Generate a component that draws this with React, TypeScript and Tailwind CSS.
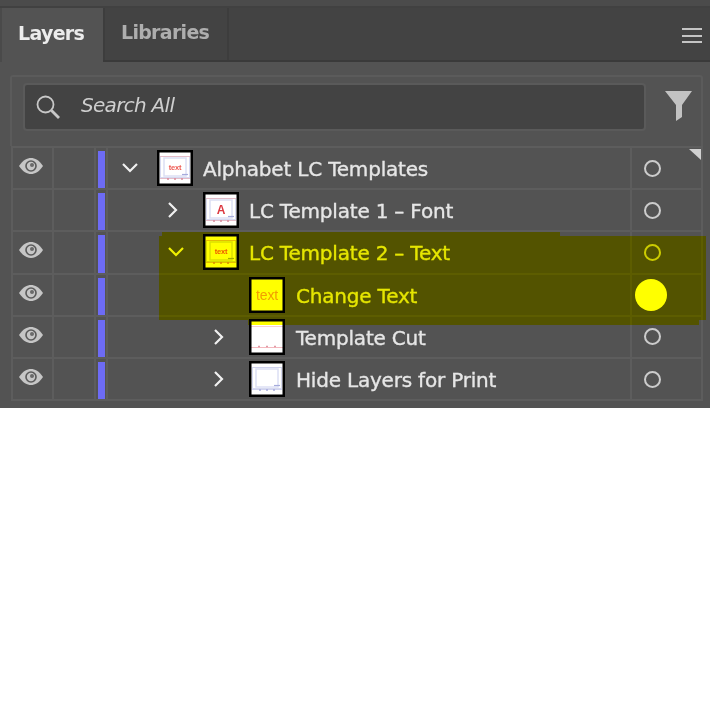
const font = { fontFamily: '"DejaVu Sans", "Noto Sans", sans-serif' };

function Eye() {
  return (
    <svg width="26" height="18" viewBox="0 0 26 18" aria-hidden="true">
      <path d="M1 9 C5 3 9 1 13 1 C17 1 21 3 25 9 C21 15 17 17 13 17 C9 17 5 15 1 9 Z" fill="#c6c6c6" />
      <circle cx="13" cy="9" r="5.8" fill="#5a5a5a" />
      <circle cx="13" cy="9" r="4.2" fill="#c6c6c6" />
      <circle cx="14" cy="8" r="2" fill="#6a6a6a" />
    </svg>
  );
}

function Chevron({ open }: { open: boolean }) {
  return (
    <svg width="16" height="18" viewBox="0 0 16 18" fill="none" stroke="#f0f0f0" strokeWidth="2.2" aria-hidden="true">
      {open ? <path d="M1 5 L8 12 L15 5" /> : <path d="M1 2 L8 9 L1 16" />}
    </svg>
  );
}

type Kind = 'root' | 'font' | 'text' | 'change' | 'cut' | 'hide';

function Thumb({ kind }: { kind: Kind }) {
  return (
    <svg width="36" height="36" viewBox="0 0 36 36" className="shrink-0" aria-hidden="true">
      <rect x="0" y="0" width="36" height="36" fill="#ffffff" />
      {kind === 'change' && (
        <text x="18" y="23" textAnchor="middle" fontSize="14" fill="#f2a0a0" fontFamily="Liberation Sans, sans-serif">text</text>
      )}
      {(kind === 'root' || kind === 'font' || kind === 'text' || kind === 'hide') && (
        <g fill="none">
          <rect x="3.5" y="6.5" width="29" height="21" stroke="#d6d9f0" strokeWidth="1" />
          <rect x="7" y="8" width="22" height="18" stroke="#dcdff4" strokeWidth="1.5" />
          <path d="M3 6.5 H33 M3 28.5 H33" stroke={kind === 'hide' ? '#d0d3ee' : '#e4bcc8'} strokeWidth="1" />
          <path d="M25 24.5 H31" stroke="#a6abdc" strokeWidth="1.2" />
          <path d="M10 29 h2 M17 29 h2 M24 29 h2" stroke={kind === 'hide' ? '#a6abdc' : '#d88a9c'} strokeWidth="1.5" />
        </g>
      )}
      {(kind === 'root' || kind === 'text') && (
        <text x="18" y="19.5" textAnchor="middle" fontSize="7.5" fill="#ee5a52" fontWeight="700" fontFamily="Liberation Sans, sans-serif">text</text>
      )}
      {kind === 'font' && (
        <text x="18" y="22" textAnchor="middle" fontSize="12" fill="#dc3a42" fontWeight="700" fontFamily="Liberation Sans, sans-serif">A</text>
      )}
      {kind === 'cut' && (
        <g fill="none">
          <path d="M0 7.5 H36" stroke="#f6d0d4" strokeWidth="1" />
          <path d="M0 28.5 H36" stroke="#f4b8be" strokeWidth="1" />
          <path d="M9 27.5 h2 M17 27.5 h2 M25 27.5 h2" stroke="#e09aa6" strokeWidth="1.5" />
        </g>
      )}
      <rect x="1.25" y="1.25" width="33.5" height="33.5" fill="none" stroke="#000000" strokeWidth="2.5" />
    </svg>
  );
}

type Row = { name: string; kind: Kind; eye: boolean; indent: string; gap: string; chevron: 'open' | 'closed' | null };

const rows: Row[] = [
  { name: 'Alphabet LC Templates', kind: 'root', eye: true, indent: 'pl-[3px]', gap: 'ml-[10px]', chevron: 'open' },
  { name: 'LC Template 1 – Font', kind: 'font', eye: false, indent: 'pl-[49px]', gap: 'ml-[10px]', chevron: 'closed' },
  { name: 'LC Template 2 – Text', kind: 'text', eye: true, indent: 'pl-[49px]', gap: 'ml-[10px]', chevron: 'open' },
  { name: 'Change Text', kind: 'change', eye: true, indent: 'pl-[95px]', gap: 'ml-[11px]', chevron: null },
  { name: 'Template Cut', kind: 'cut', eye: true, indent: 'pl-[95px]', gap: 'ml-[11px]', chevron: 'closed' },
  { name: 'Hide Layers for Print', kind: 'hide', eye: true, indent: 'pl-[95px]', gap: 'ml-[11px]', chevron: 'closed' },
];

export default function App() {
  return (
    <div className="w-[710px] h-[702px] bg-white" style={font}>
      <div className="relative h-[408px] bg-[#535353] overflow-hidden">
        <div className="h-[8px] bg-[#4b4b4b] border-b-2 border-[#414141]" />
        <div className="flex h-[54px] bg-[#434343] border-b-2 border-[#3a3a3a]">
          <div className="w-[103px] h-[54px] bg-[#535353] border-l-2 border-[#4a4a4a] flex items-center pl-[16px] pb-[4px] text-[19px] font-bold text-[#ececec] tracking-[-0.7px]">
            Layers
          </div>
          <div className="w-[126px] border-l-2 border-r-2 border-[#3d3d3d] flex items-center pl-[16px] pb-[4px] text-[19px] font-bold text-[#aeaeae] tracking-[-0.7px]">
            Libraries
          </div>
          <div className="flex-1 flex justify-end pr-[8px] pt-[20px]">
            <div className="w-[20px] h-[15px] flex flex-col justify-between">
              <div className="h-[2px] bg-[#c4c4c4]" />
              <div className="h-[2px] bg-[#c4c4c4]" />
              <div className="h-[2px] bg-[#c4c4c4]" />
            </div>
          </div>
        </div>

        <div className="ml-[10px] mt-[13px] w-[693px] h-[71px] border-t-2 border-x-2 border-[#5b5b5b] rounded-t-[3px] flex pl-[11px] pt-[6px]">
          <div className="w-[623px] h-[48px] bg-[#434343] border-2 border-[#5a5a5a] rounded-[4px] flex items-center pl-[10px]">
            <svg width="26" height="26" viewBox="0 0 26 26" fill="none" stroke="#c8c8c8" aria-hidden="true">
              <circle cx="10.5" cy="10.5" r="8" strokeWidth="1.8" />
              <path d="M16.5 16.5 L24 24" strokeWidth="2.8" />
            </svg>
            <span className="ml-[20px] pb-[4px] italic text-[20px] text-[#cfcfcf] tracking-[-0.7px]">Search All</span>
          </div>
          <svg width="28" height="30" viewBox="0 0 28 30" className="ml-[19px] mt-[8px]" aria-hidden="true">
            <path d="M0 0 H27 L17 14 V26 L11 30 V14 Z" fill="#c2c2c2" />
          </svg>
        </div>

        <div className="relative ml-[11px] w-[692px] border-t-2 border-r-2 border-l-2 border-[#5d5d5d]">
          {rows.map((r) => (
            <div key={r.name} className="flex h-[42.2px] border-b-2 border-[#5d5d5d]">
              <div className="w-[41px] border-r-2 border-[#5d5d5d] flex items-center justify-center pb-[4px] pr-[4px]">
                {r.eye && <Eye />}
              </div>
              <div className="w-[42px] border-r-2 border-[#5d5d5d]" />
              <div className="w-[12px] border-r-2 border-[#5d5d5d] pl-[2px] pt-[3px]">
                <div className="w-[7px] h-full bg-[#6d6bf5]" />
              </div>
              <div className={`flex-1 flex items-center text-[20px] text-[#e6e6e6] tracking-[-0.2px] [-webkit-text-stroke:0.35px] ${r.indent}`}>
                <div className="w-[46px] pl-[11px]">
                  {r.chevron && <Chevron open={r.chevron === 'open'} />}
                </div>
                <Thumb kind={r.kind} />
                <span className={`pt-[2px] ${r.gap}`}>{r.name}</span>
              </div>
              <div className="w-[71px] border-l-2 border-[#5d5d5d] pl-[12px] flex items-center">
                <div className="w-[17px] h-[17px] rounded-full border-2 border-[#cccccc]" />
              </div>
            </div>
          ))}
          <svg width="12" height="11" viewBox="0 0 12 11" className="absolute right-0 top-[1px]" aria-hidden="true">
            <path d="M0 0 H12 V11 Z" fill="#d0d0d0" />
          </svg>
        </div>

        <div className="absolute left-[635px] top-[279px] w-[32px] h-[32px] rounded-full bg-white" />
        <svg width="710" height="408" viewBox="0 0 710 408" className="absolute left-0 top-0 mix-blend-multiply" aria-hidden="true">
          <path d="M162 232 H560 V236 H706 V320 H699 V325 H248 V320 H159 V236 H162 Z" fill="#ffff00" />
        </svg>
      </div>
    </div>
  );
}
